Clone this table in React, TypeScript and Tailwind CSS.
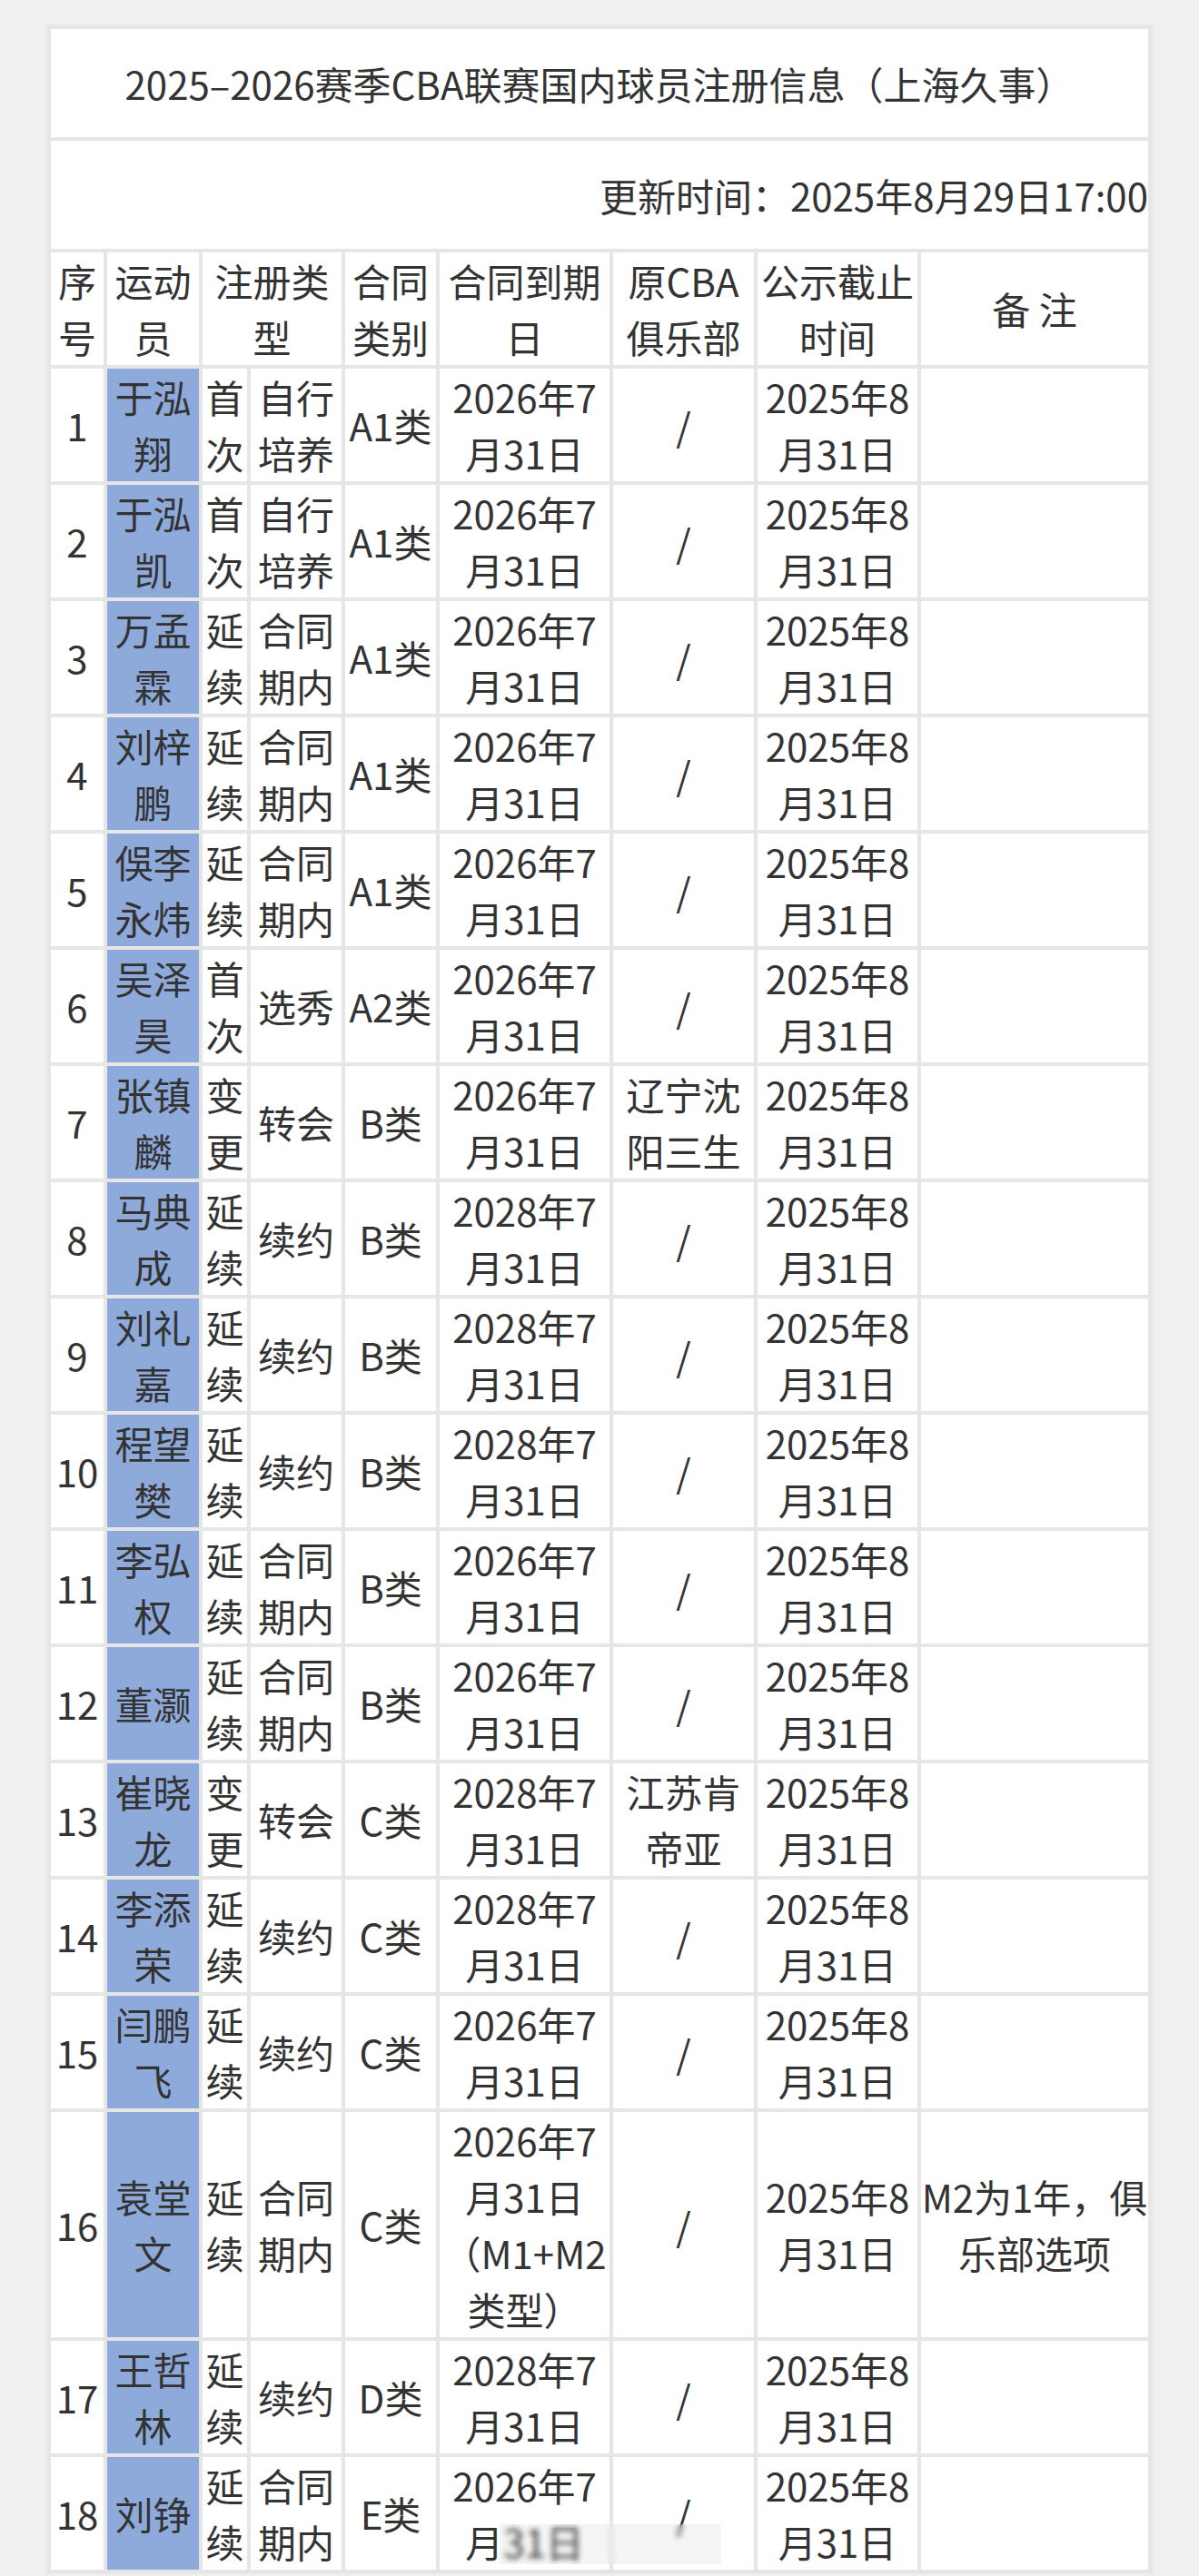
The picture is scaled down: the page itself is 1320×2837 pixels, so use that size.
const rows: string[][] = [
  ["1", "于泓|翔", "首|次", "自行|培养", "A1类", "2026年7|月31日", "/", "2025年8|月31日", ""],
  ["2", "于泓|凯", "首|次", "自行|培养", "A1类", "2026年7|月31日", "/", "2025年8|月31日", ""],
  ["3", "万孟|霖", "延|续", "合同|期内", "A1类", "2026年7|月31日", "/", "2025年8|月31日", ""],
  ["4", "刘梓|鹏", "延|续", "合同|期内", "A1类", "2026年7|月31日", "/", "2025年8|月31日", ""],
  ["5", "俁李|永炜", "延|续", "合同|期内", "A1类", "2026年7|月31日", "/", "2025年8|月31日", ""],
  ["6", "吴泽|昊", "首|次", "选秀", "A2类", "2026年7|月31日", "/", "2025年8|月31日", ""],
  ["7", "张镇|麟", "变|更", "转会", "B类", "2026年7|月31日", "辽宁沈|阳三生", "2025年8|月31日", ""],
  ["8", "马典|成", "延|续", "续约", "B类", "2028年7|月31日", "/", "2025年8|月31日", ""],
  ["9", "刘礼|嘉", "延|续", "续约", "B类", "2028年7|月31日", "/", "2025年8|月31日", ""],
  ["10", "程望|樊", "延|续", "续约", "B类", "2028年7|月31日", "/", "2025年8|月31日", ""],
  ["11", "李弘|权", "延|续", "合同|期内", "B类", "2026年7|月31日", "/", "2025年8|月31日", ""],
  ["12", "董灏", "延|续", "合同|期内", "B类", "2026年7|月31日", "/", "2025年8|月31日", ""],
  ["13", "崔晓|龙", "变|更", "转会", "C类", "2028年7|月31日", "江苏肯|帝亚", "2025年8|月31日", ""],
  ["14", "李添|荣", "延|续", "续约", "C类", "2028年7|月31日", "/", "2025年8|月31日", ""],
  ["15", "闫鹏|飞", "延|续", "续约", "C类", "2026年7|月31日", "/", "2025年8|月31日", ""],
  ["16", "袁堂|文", "延|续", "合同|期内", "C类", "2026年7|月31日|（M1+M2|类型）", "/", "2025年8|月31日", "M2为1年，俱|乐部选项"],
  ["17", "王哲|林", "延|续", "续约", "D类", "2028年7|月31日", "/", "2025年8|月31日", ""],
  ["18", "刘铮", "延|续", "合同|期内", "E类", "2026年7|月31日", "/", "2025年8|月31日", ""],
];

const headers = ["序|号", "运动|员", "注册类|型", "合同|类别", "合同到期|日", "原CBA|俱乐部", "公示截止|时间", "备 注"];

function Lines({ text }: { text: string }) {
  const parts = text.split("|");
  return (
    <>
      {parts.map((p, i) => (
        <span key={i} className="block whitespace-pre">
          {p}
        </span>
      ))}
    </>
  );
}

export default function App() {
  return (
    <div className="min-h-screen bg-[#f0f0f0] pt-[26px] font-['Noto_Sans_CJK_SC',sans-serif] text-[#333333]">
      <table className="mx-auto w-[1220px] table-fixed border-separate border-spacing-1 border-2 border-[#ebebeb] bg-[#e6e6e6] text-[42px] leading-[62px]">
        <colgroup>
          <col className="w-[58px]" />
          <col className="w-[101px]" />
          <col className="w-[49px]" />
          <col className="w-[100px]" />
          <col className="w-[100px]" />
          <col className="w-[187px]" />
          <col className="w-[155px]" />
          <col className="w-[176px]" />
          <col className="w-[250px]" />
        </colgroup>
        <tbody>
          {/* title */}
          <tr>
            <td colSpan={9} className="h-[119px] bg-white p-0 text-center whitespace-nowrap">
              2025–2026赛季CBA联赛国内球员注册信息（上海久事）
            </td>
          </tr>
          <tr>
            <td colSpan={9} className="h-[119px] bg-white p-0 text-right whitespace-nowrap">
              更新时间：2025年8月29日17:00
            </td>
          </tr>

          {/* header */}
          <tr>
            {headers.map((h, i) => (
              <td
                key={h}
                colSpan={i === 2 ? 2 : 1}
                className="h-[124px] bg-white p-0 text-center whitespace-nowrap"
              >
                <Lines text={h} />
              </td>
            ))}
          </tr>

          {rows.map((r) => (
            <tr key={r[0]}>
              {r.map((cell, i) => (
                <td
                  key={i}
                  className={
                    i === 1
                      ? "h-[124px] bg-[#8eaadb] p-0 text-center whitespace-nowrap"
                      : i === 5 && r[0] === "18"
                        ? "relative h-[124px] bg-white p-0 text-center whitespace-nowrap"
                        : "h-[124px] bg-white p-0 text-center whitespace-nowrap"
                  }
                >
                  <Lines text={cell} />
                  {i === 5 && r[0] === "18" && (
                    <div className="absolute left-[66px] top-[74px] z-10 h-[44px] w-[244px] bg-[#9a9a9a]/10 backdrop-blur-[3px]" />
                  )}
                </td>
              ))}
            </tr>
          ))}
        </tbody>
      </table>
    </div>
  );
}
